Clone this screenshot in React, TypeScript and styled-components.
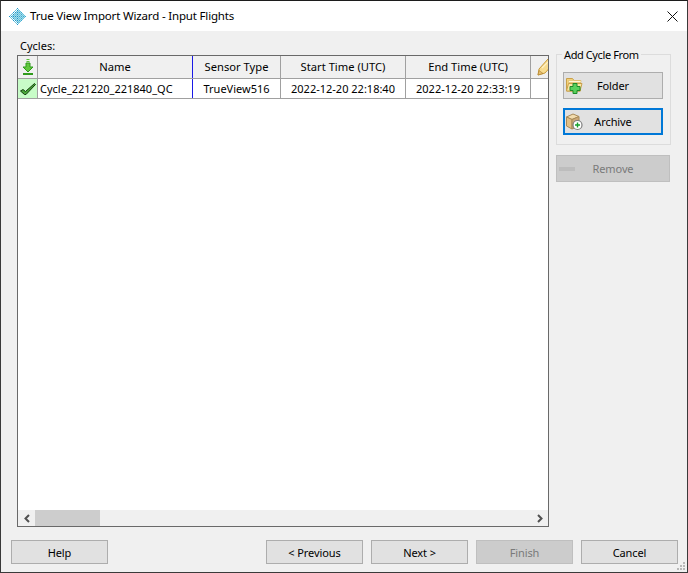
import React from "react";
import styled, { createGlobalStyle } from "styled-components";

const Global = createGlobalStyle`
  html, body { margin: 0; padding: 0; background: #fff; }
  body { font-family: "Noto Sans", "Open Sans", sans-serif; font-size: 12px; color: #000; }
  * { box-sizing: border-box; }
`;

const Win = styled.div`
  width: 688px; height: 573px; display: flex; flex-direction: column;
  border: 1px solid #3a3a3a; border-top-color: #1c1c1c; background: #f0f0f0; position: relative;
`;
const TitleBar = styled.div`
  height: 30px; flex: none; background: #fff; display: flex; align-items: center; padding-left: 8px; gap: 4px;
`;
const TitleText = styled.div` flex: 1; font-size: 11.5px; letter-spacing: -0.17px; padding-bottom: 1px; `;
const CloseBtn = styled.div` width: 30px; height: 30px; display: flex; align-items: center; justify-content: center; `;
const Body = styled.div`
  flex: 1; display: flex; flex-direction: column; padding: 9px 9px 8px 10px; min-height: 0;
`;
const Main = styled.div` flex: 1; display: flex; gap: 7px; min-height: 0; padding: 0 7px 0 6px; `;
const LeftCol = styled.div` width: 532px; display: flex; flex-direction: column; `;
const CyclesLabel = styled.div` height: 15px; line-height: 11px; padding-left: 3px; font-size: 11px; `;
const TableBox = styled.div`
  width: 532px; height: 472px; border: 1px solid #696969; background: #fff; display: flex; flex-direction: column; overflow: hidden;
`;
const Row = styled.div<{ $header?: boolean }>`
  display: grid; grid-template-columns: 20px 155px 88px 125px 125px 24px; flex: none;
  height: ${p => (p.$header ? 23 : 20)}px;
  border-bottom: 1px solid #a0a0a0;
  background: ${p => (p.$header ? "#f0f0f0" : "#fff")};
  font-size: ${p => (p.$header ? 11.2 : 11)}px;
  line-height: ${p => (p.$header ? 22 : 18)}px;
`;
const Cell = styled.div<{ $blue?: boolean; $left?: boolean; $ok?: boolean; $last?: boolean; $top?: boolean; $pad?: number }>`
  display: flex; align-items: ${p => (p.$top ? "flex-start" : "center")}; justify-content: ${p => (p.$left ? "flex-start" : "center")};
  padding-left: ${p => (p.$pad ?? (p.$left ? 2 : 0))}px;
  border-right: ${p => (p.$last ? "none" : `1px solid ${p.$blue ? "#1a1ae6" : "#a0a0a0"}`)};
  background: ${p => (p.$ok ? "#c8fcc8" : "transparent")};
  white-space: nowrap; overflow: hidden;
`;
const TableFill = styled.div` flex: 1; background: #fff; `;
const HScroll = styled.div` height: 16px; flex: none; background: #f0f0f0; display: flex; align-items: center; `;
const ScrollArrow = styled.div` width: 17px; height: 16px; display: flex; align-items: center; justify-content: center; flex: none; `;
const ScrollTrack = styled.div` flex: 1; height: 16px; `;
const ScrollThumb = styled.div` width: 65px; height: 16px; background: #cdcdcd; `;
const RightCol = styled.div` width: 115px; display: flex; flex-direction: column; padding-top: 8px; `;
const Group = styled.fieldset`
  margin: 0; padding: 11px 6px 0; width: 115px; height: 97px; border: 1px solid #dcdcdc; border-radius: 0; flex: none;
  display: flex; flex-direction: column; gap: 9px; position: relative;
`;
const GroupLegend = styled.legend`
  padding: 0 2px; margin-left: -1px; font-size: 11px; line-height: 13px; letter-spacing: -0.4px;
`;
const Btn = styled.div<{ $disabled?: boolean; $focus?: boolean; $wide?: boolean; $w?: number }>`
  flex: none; height: ${p => (p.$w ? 24 : 27)}px; width: ${p => (p.$w ? `${p.$w}px` : p.$wide ? "114px" : "100px")};
  display: flex; align-items: center; justify-content: center;
  background: ${p => (p.$disabled ? "#cccccc" : "#e1e1e1")};
  border: ${p => (p.$focus ? "2px solid #0078d7" : `1px solid ${p.$disabled ? "#bfbfbf" : "#adadad"}`)};
  color: ${p => (p.$disabled ? "#7a7a7a" : "#000")};
  font-size: 11px; letter-spacing: -0.1px; position: relative;
`;
const BtnIcon = styled.span<{ $focus?: boolean }>`
  position: absolute; left: ${p => (p.$focus ? 1 : 2)}px; top: 50%; transform: translateY(-50%); display: flex;
`;
const RemoveSlot = styled.div` margin-top: 10px; `;
const Footer = styled.div` flex: none; display: flex; margin-top: 12px; padding-right: 0; `;
const FooterRight = styled.div` margin-left: auto; display: flex; gap: 8px; `;
const Grip = styled.svg` position: absolute; right: 0; bottom: 0; `;

const LogoIcon = () => {
  const dots: React.ReactNode[] = [];
  for (let y = 0; y < 17; y++) {
    for (let x = 0; x < 17; x++) {
      const d = Math.abs(x - 8) + Math.abs(y - 8);
      if (d > 8 || (x + y) % 2 !== 0) continue;
      const strong = x % 4 === 0 || y % 4 === 0;
      const c = strong ? (x < 9 ? "#1f95c8" : "#3aa9d0") : "#6cc2dc";
      dots.push(<rect key={`${x}-${y}`} x={x} y={y} width="1" height="1" fill={c} />);
      if (d < 7) dots.push(<rect key={`f${x}-${y}`} x={x + 1} y={y} width="1" height="1" fill="#a5dcea" />);
    }
  }
  return <svg width="17" height="17" viewBox="0 0 17 17">{dots}</svg>;
};

const ImportIcon = () => (
  <svg width="12" height="17" viewBox="0 0 12 17">
    <path d="M4.5 0h3v1h-3zM4.5 2h3v1h-3z" fill="#5cc03c" />
    <path d="M4 4h4v4h3L6 13 1 8h3z" fill="#62c83e" stroke="#2f9a1c" strokeWidth="1" />
    <rect x="1" y="14" width="10" height="2" fill="#2f9a1c" />
  </svg>
);

const CheckIcon = () => (
  <svg width="18" height="14" viewBox="0 0 18 14">
    <path d="M1.5 9 L4 7.5 L6.5 9.5 L15.5 1.5 L16.5 2.5 L7 12.5 L5.5 12.5 Z" fill="#4aa838" stroke="#123c0e" strokeWidth="1" strokeLinejoin="round" />
  </svg>
);

const PencilIcon = () => (
  <svg width="18" height="18" viewBox="0 0 18 18">
    <path d="M1 17 L2 11 L11 1 L17 5 L8 15 Z" fill="#f8dc90" stroke="#c89a3a" strokeWidth="1" />
    <path d="M1 17 L2 12.5 L6 15.5 Z" fill="#e8c070" stroke="#a87a2a" strokeWidth="0.6" />
    <path d="M5 10 L12 3" stroke="#fff2c8" strokeWidth="1.2" />
  </svg>
);

const FolderIcon = () => (
  <svg width="20" height="20" viewBox="0 0 20 20">
    <path d="M0.5 2.5h6l1.5 2h6.5v10.5h-14z" fill="#f3d27a" stroke="#c9a04a" />
    <path d="M2.5 4.5h12.5v2H2.5z" fill="#fff6d8" stroke="#d8b868" strokeWidth="0.6" />
    <path d="M0.5 15 L2.5 7.5h13.5l-2 7.5z" fill="#fbe6a6" stroke="#c9a04a" />
    <path d="M7 7.5h4v3h3v4h-3v3h-4v-3h-3v-4h3z" fill="#58d05c" stroke="#1e8a2a" />
  </svg>
);

const ArchiveIcon = () => (
  <svg width="22" height="22" viewBox="0 0 22 22">
    <path d="M0.5 6 L7 3 L13 5.5 L6 8.5 Z" fill="#f2dcae" stroke="#a88a58" />
    <path d="M0.5 6 L6 8.5 V18 L0.5 15 Z" fill="#e2bf85" stroke="#a88a58" />
    <path d="M6 8.5 L13 5.5 V15 L6 18 Z" fill="#cba877" stroke="#a88a58" />
    <circle cx="11.5" cy="14" r="4.5" fill="#fff" stroke="#7d7d7d" strokeWidth="1.2" />
    <path d="M11.5 11.5v5M9 14h5" stroke="#16a02c" strokeWidth="1.4" />
  </svg>
);

const Chevron = ({ right }: { right?: boolean }) => (
  <svg width="8" height="9" viewBox="0 0 8 9">
    <path d={right ? "M2 1l3.5 3.5L2 8" : "M6 1L2.5 4.5 6 8"} fill="none" stroke="#505050" strokeWidth="2" />
  </svg>
);

export default function App() {
  return (
    <Win>
      <Global />
      <TitleBar>
        <LogoIcon />
        <TitleText>True View Import Wizard - Input Flights</TitleText>
        <CloseBtn>
          <svg width="11" height="11" viewBox="0 0 11 11">
            <path d="M.5.5l10 10M10.5.5l-10 10" stroke="#111" strokeWidth="1" />
          </svg>
        </CloseBtn>
      </TitleBar>
      <Body>
        <Main>
          <LeftCol>
            <CyclesLabel>Cycles:</CyclesLabel>
            <TableBox>
              <Row $header>
                <Cell><ImportIcon /></Cell>
                <Cell $blue $top>Name</Cell>
                <Cell $top>Sensor Type</Cell>
                <Cell $top>Start Time (UTC)</Cell>
                <Cell $top>End Time (UTC)</Cell>
                <Cell $left $last $pad={6}><PencilIcon /></Cell>
              </Row>
              <Row>
                <Cell $ok><CheckIcon /></Cell>
                <Cell $blue $left>Cycle_221220_221840_QC</Cell>
                <Cell>TrueView516</Cell>
                <Cell>2022-12-20 22:18:40</Cell>
                <Cell>2022-12-20 22:33:19</Cell>
                <Cell $last />
              </Row>
              <TableFill />
              <HScroll>
                <ScrollArrow><Chevron /></ScrollArrow>
                <ScrollThumb />
                <ScrollTrack />
                <ScrollArrow><Chevron right /></ScrollArrow>
              </HScroll>
            </TableBox>
          </LeftCol>
          <RightCol>
            <Group>
              <GroupLegend>Add Cycle From</GroupLegend>
              <Btn><BtnIcon><FolderIcon /></BtnIcon>Folder</Btn>
              <Btn $focus><BtnIcon $focus><ArchiveIcon /></BtnIcon>Archive</Btn>
            </Group>
            <RemoveSlot>
              <Btn $disabled $wide>
                <BtnIcon><svg width="18" height="4" viewBox="0 0 18 4"><rect width="16" height="4" fill="#bdbdbd" /></svg></BtnIcon>
                Remove
              </Btn>
            </RemoveSlot>
          </RightCol>
        </Main>
        <Footer>
          <Btn $w={97}>Help</Btn>
          <FooterRight>
            <Btn $w={97}>&lt; Previous</Btn>
            <Btn $w={97}>Next &gt;</Btn>
            <Btn $w={97} $disabled>Finish</Btn>
            <Btn $w={97}>Cancel</Btn>
          </FooterRight>
        </Footer>
      </Body>
      <Grip width="11" height="11" viewBox="0 0 11 11">
        <g fill="#b8b8b8">
          <rect x="7" y="1" width="2" height="2" />
          <rect x="4" y="4" width="2" height="2" />
          <rect x="7" y="4" width="2" height="2" />
          <rect x="1" y="7" width="2" height="2" />
          <rect x="4" y="7" width="2" height="2" />
          <rect x="7" y="7" width="2" height="2" />
        </g>
      </Grip>
    </Win>
  );
}
